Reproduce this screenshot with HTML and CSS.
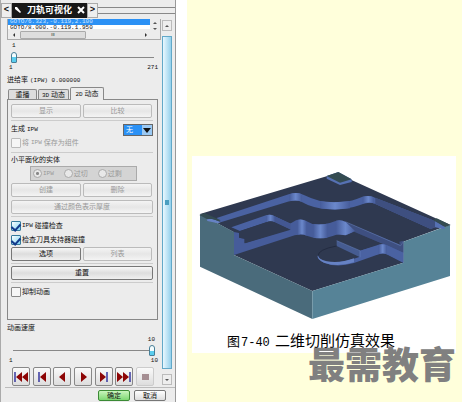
FILE: index.html
```html
<!DOCTYPE html>
<html lang="zh-CN">
<head>
<meta charset="utf-8">
<title>刀轨可视化</title>
<link rel="stylesheet" href="styles.css">
</head>
<body>
<main class="page">
  <section class="dialog">
    <header class="titlebar">
      <button class="nav" aria-label="上一个">&lt;</button>
      <div class="title">
        <svg class="pin" viewBox="0 0 8 8"><path d="M1 1l2 0 4 5-1 1-5-4z" fill="#fff"/></svg>
        <h1>刀轨可视化</h1>
        <button class="close" aria-label="关闭"><svg viewBox="0 0 8 8"><path d="M1 1l6 6M7 1l-6 6" stroke="#fff" stroke-width="2"/></svg></button>
      </div>
      <button class="nav" aria-label="下一个">&gt;</button>
      <span class="grip"></span>
    </header>
    <div class="body">
      <div class="content">
        <div class="list">
          <div class="rows">
            <div class="row selected">GOTO/6.323,-0.119,2.100</div>
            <div class="row">GOTO/8.000,-0.119,1.950</div>
          </div>
          <div class="spin"><i class="up"></i><i class="down"></i></div>
          <div class="hscroll"><i class="left"></i><span class="hthumb">III</span><i class="right"></i></div>
        </div>
        <div class="value"><span class="n">1</span></div>
        <input class="slider" type="range" min="1" max="271" value="1" aria-label="刀轨位置">
        <div class="limits"><span>1</span><span>271</span></div>
        <p class="feed">进给率 <span class="n">(IPW) 0.000000</span></p>
        <div class="tabs">
          <button class="tab">重播</button>
          <button class="tab"><span class="n">3D</span> 动态</button>
          <button class="tab active"><span class="n">2D</span> 动态</button>
        </div>
        <div class="panel">
          <div class="pair"><button class="btn" disabled>显示</button><button class="btn" disabled>比较</button></div>
          <hr>
          <div class="field">
            <label for="ipw">生成 <span class="n">IPW</span></label>
            <span class="combo"><select id="ipw"><option>无</option></select><svg viewBox="0 0 10 10"><path d="M1 3h8l-4 5z" fill="#111"/></svg></span>
          </div>
          <label class="check off"><input type="checkbox" disabled>将 <span class="n">IPW</span> 保存为组件</label>
          <hr>
          <p class="group">小平面化的实体</p>
          <div class="radios">
            <label><input type="radio" name="solid" checked disabled><span class="n">IPW</span></label>
            <label><input type="radio" name="solid" disabled>过切</label>
            <label><input type="radio" name="solid" disabled>过剩</label>
          </div>
          <div class="pair"><button class="btn" disabled>创建</button><button class="btn" disabled>删除</button></div>
          <button class="btn wide" disabled>通过颜色表示厚度</button>
          <hr>
          <label class="check"><input type="checkbox" checked><span class="n">IPW</span> 碰撞检查</label>
          <label class="check"><input type="checkbox" checked>检查刀具夹持器碰撞</label>
          <div class="pair"><button class="btn">选项</button><button class="btn" disabled>列表</button></div>
          <hr>
          <button class="btn wide">重置</button>
          <hr>
          <label class="check"><input type="checkbox">抑制动画</label>
        </div>
        <p class="speed">动画速度</p>
        <div class="value end"><span class="n">10</span></div>
        <input class="slider" type="range" min="1" max="10" value="10" aria-label="动画速度">
        <div class="limits"><span>1</span><span>10</span></div>
        <div class="player">
          <button aria-label="到开头"><svg viewBox="0 0 16 16"><path d="M2 3v10" stroke="#2a2a9a" stroke-width="1.4"/><path d="M9 3v10L3 8zM15 3v10L9 8z" fill="#8d0505"/></svg></button>
          <button aria-label="上一步"><svg viewBox="0 0 16 16"><path d="M5 3v10" stroke="#2a2a9a" stroke-width="1.4"/><path d="M12 3v10L6 8z" fill="#8d0505"/></svg></button>
          <button aria-label="倒放"><svg viewBox="0 0 16 16"><path d="M11 3v10L5 8z" fill="#8d0505"/></svg></button>
          <button aria-label="播放"><svg viewBox="0 0 16 16"><path d="M6 3v10l6-5z" fill="#8d0505"/></svg></button>
          <button aria-label="下一步"><svg viewBox="0 0 16 16"><path d="M4 3v10l6-5z" fill="#8d0505"/><path d="M11 3v10" stroke="#2a2a9a" stroke-width="1.4"/></svg></button>
          <button aria-label="到结尾"><svg viewBox="0 0 16 16"><path d="M1 3v10l6-5zM7 3v10l6-5z" fill="#8d0505"/><path d="M14 3v10" stroke="#2a2a9a" stroke-width="1.4"/></svg></button>
          <button aria-label="停止" disabled><svg viewBox="0 0 16 16"><path d="M5 5h7v6H5z" fill="#a58e92"/></svg></button>
        </div>
      </div>
      <div class="vscroll">
        <i class="cap"><b class="up"></b></i>
        <span class="vthumb"></span>
        <i class="cap"><b class="down"></b></i>
      </div>
    </div>
    <footer class="actions"><button class="ok">确定</button><button>取消</button></footer>
  </section>

  <section class="sheet">
    <figure class="figure">
      <svg class="part" viewBox="6 18 792 516" role="img" aria-label="二维切削仿真效果">
        <defs>
          <linearGradient id="w" x1="0" x2="1"><stop offset="0" stop-color="#465c9a"/><stop offset=".5" stop-color="#6b88cb"/><stop offset="1" stop-color="#465c9a"/></linearGradient>
        </defs>
        <path d="M30 192L440 70 780 224 640 275V338L367 423 132 315V247Z" fill="#2f3950"/>
        <path d="M30 192L132 246V315L367 423V507L30 350Z" fill="#4a6b7b"/>
        <path d="M367 423L640 338V275L780 225V378L367 507Z" fill="#568397"/>
        <!-- outer ledge -->
        <path d="M80 204L296 133Q320 125 340 134Q390 158 430 157Q475 157 500 147Q532 132 555 143L735 213V232L722 237 556 162Q535 153 508 166Q470 180 420 178Q370 176 334 155Q318 148 298 154L92 217Z" fill="#4a62a2"/>
        <path d="M556 143L735 213V232L722 237 556 162Z" fill="#3e4f80"/>
        <path d="M298 133Q320 125 336 133V155Q318 148 298 154Z" fill="url(#w)"/>
        <path d="M390 153Q430 160 480 153V175Q430 182 390 174Z" fill="url(#w)"/>
        <path d="M518 140Q536 135 552 142V160Q536 154 518 161Z" fill="url(#w)"/>
        <!-- stepped wall -->
        <path d="M132 246L147 249V263L163 266V280L300 237V221L318 211Q335 205 350 214Q368 226 390 223Q415 222 430 215Q450 206 466 215L630 284 640 275V338L594 315Q580 307 568 312L510 322V300L572 283 492 246 468 256Q448 248 428 258Q390 272 350 257Q336 250 314 256L132 315Z" fill="#465c9a"/>
        <path d="M466 215L630 287 628 275 640 272V308L592 286 492 246 466 236Z" fill="#3e4f80"/>
        <path d="M466 215L632 287 640 275" fill="none" stroke="#657cae" stroke-width="1.5"/>
        <path d="M322 210Q336 206 350 214V257Q336 250 322 254Z" fill="url(#w)"/>
        <path d="M370 222Q390 225 412 221V263Q390 267 370 263Z" fill="url(#w)"/>
        <path d="M438 212Q453 208 468 217L495 243 466 256 438 253Z" fill="url(#w)"/>
        <!-- left pocket -->
        <path d="M124 232L228 196Q242 192 254 199L302 221V239L254 217Q242 211 228 217L150 243Z" fill="#4a62a2"/>
        <path d="M228 196Q242 192 254 199V217Q242 211 228 217Z" fill="url(#w)"/>
        <path d="M254 199L302 221V239L254 217Z" fill="#435792"/>
        <path d="M150 243L230 217Q242 211 254 217L302 239 165 280V266L148 263V243Z" fill="#2f3950"/>
        <!-- raised step and round pocket -->
        <path d="M440 272L492 245 580 282 510 302Z" fill="#2f3950"/>
        <path d="M440 272L510 302V322L440 288Z" fill="#465c91"/>
        <path d="M510 302L566 284Q578 281 590 286L640 308V338L594 314Q580 308 566 313L492 339Q440 354 402 338Q380 325 384 314Q384 330 412 335Q450 342 510 320Z" fill="#4a62a2"/>
        <path d="M384 314Q382 326 410 334Q450 341 492 325V337Q440 353 402 338Q378 326 384 314Z" fill="#6682c4"/>
        <path d="M566 284Q578 281 590 286V312Q578 307 566 313Z" fill="url(#w)"/>
        <path d="M440 288Q384 298 384 318" fill="none" stroke="#1c2438" stroke-width="2"/>
        <path d="M440 272L510 302V322" fill="none" stroke="#6c88c4" stroke-width="1.5"/>
        <!-- corner pads -->
        <path d="M410 78L445 66 485 88V96L450 105 410 86Z" fill="#5671b3"/>
        <path d="M410 78L445 66 485 88 450 98Z" fill="#344b51"/>
        <path d="M50 207Q70 203 92 217L84 220 52 213Z" fill="#6682c4"/>
        <path d="M28 195L44 189 92 211 86 214Q65 202 52 208Z" fill="#344b51"/>
        <path d="M735 212L764 230V238L735 232Z" fill="#5671b3"/>
        <path d="M730 211L740 205 782 225 766 231Z" fill="#344b51"/>
      </svg>
      <figcaption><small>图<span class="code">7-40</span></small> 二维切削仿真效果</figcaption>
      <div class="watermark">最需教育</div>
    </figure>
  </section>
</main>
</body>
</html>
```
FILE: styles.css
```css
* { box-sizing: border-box; }
body {
  margin: 0;
  background: #fff;
  color: #111;
  font: 7px/10px "Liberation Sans", "Noto Sans CJK SC", sans-serif;
}
h1, p, figure { margin: 0; }
button { font: inherit; color: inherit; padding: 0; }
.n, .limits { font-family: "Liberation Mono", monospace; font-size: 6px; }
.page {
  display: grid;
  grid-template-columns: 176px minmax(0, 1fr);
  gap: 11px;
  min-height: 100vh;
}

/* dialog frame */
.dialog {
  display: flex;
  flex-direction: column;
  background: #ececec;
  border-left: 1px solid #aaa;
  border-right: 1px solid #999;
}
.titlebar { display: flex; align-items: center; height: 19px; padding-top: 1px; }
.nav {
  width: 11px;
  height: 15px;
  border: 1px solid #aaa;
  background: #eee;
  font: bold 9px/12px "Liberation Mono", monospace;
}
.title {
  display: flex;
  align-items: center;
  gap: 5px;
  height: 15px;
  padding: 0 2px;
  background: #181818;
  color: #fff;
}
.title svg { display: block; width: 8px; height: 8px; }
.title h1 { font-size: 9px; line-height: 14px; }
.close { border: 0; background: none; }
.grip {
  flex: 1;
  height: 7px;
  border-top: 1px solid #888;
  border-bottom: 1px solid #888;
}
.body { display: flex; flex: 1; gap: 1px; padding-right: 3px; }
.content { flex: 1; min-width: 0; padding-left: 6px; }

/* tool path list */
.list {
  display: grid;
  grid-template-columns: 1fr 10px;
  border: 1px solid #aaa;
  border-top: 0;
  width: 154px;
  height: 21px;
}
.rows { height: 10px; overflow: hidden; background: #fff; padding-left: 2px; }
.row {
  height: 6px;
  font: 6px/6px "Liberation Mono", monospace;
  white-space: nowrap;
}
.selected { background: #2b91f5; color: #cfe6ff; margin-left: -2px; padding-left: 2px; }
.spin { display: flex; flex-direction: column; align-items: center; justify-content: space-between; padding: 3px 0 0; }
.up, .down, .left, .right { border: 2px solid transparent; }
.up { border-bottom-color: #555; border-top: 0; }
.down { border-top-color: #555; border-bottom: 0; }
.left { border-right-color: #333; border-left: 0; }
.right { border-left-color: #333; border-right: 0; }
.hscroll { display: flex; align-items: center; padding: 1px 3px 0 5px; gap: 5px; }
.hthumb {
  width: 66px;
  height: 8px;
  border: 1px solid #aaa;
  border-radius: 1px;
  background: #ddd;
  font: 4px/6px "Liberation Sans", sans-serif;
  text-align: center;
}
.hscroll .right { margin-left: auto; }

/* sliders */
.value { height: 11px; padding: 0 6px 0 5px; }
.end { text-align: right; height: 10px; }
.slider {
  display: block;
  appearance: none;
  width: 144px;
  height: 12px;
  margin: 0 0 0 4px;
  background: linear-gradient(#888, #888) center / 141px 1px no-repeat;
}
.slider::-webkit-slider-thumb {
  appearance: none;
  width: 6px;
  height: 11px;
  border: 1px solid #477f98;
  border-radius: 3px 3px 1px 1px;
  background: linear-gradient(#f5fdff 50%, #5bcdee 50%);
}
.limits { display: flex; justify-content: space-between; width: 151px; padding-left: 2px; }
.feed { height: 14px; padding-top: 2px; }

/* tabs */
.tabs { display: flex; gap: 1px; align-items: flex-end; height: 12px; padding-left: 1px; }
.tab {
  width: 29px;
  height: 10px;
  border: 1px solid #888;
  border-bottom: 0;
  border-radius: 2px 2px 0 0;
  background: #ddd;
  line-height: 9px;
  white-space: nowrap;
}
.tab + .tab { width: 31px; }
.tab.active { position: relative; width: 34px; height: 13px; margin-bottom: -1px; background: #ececec; }
.panel {
  display: flex;
  flex-direction: column;
  width: 151px;
  min-height: 221px;
  padding: 4px 4px 4px 3px;
  border: 1px solid #888;
}
.pair { display: grid; grid-template-columns: 70px 69px; gap: 2px; }
.btn {
  height: 14px;
  border: 1px solid #777;
  border-radius: 2px;
  background: linear-gradient(#f8f8f8, #ddd 50%, #f0f0f0);
  line-height: 12px;
}
.btn:disabled { border-color: #bbb; color: #999; background: linear-gradient(#f4f4f4, #e6e6e6 50%, #f4f4f4); }
hr { width: 100%; margin: 2px 0; border: 0; border-top: 1px solid #ccc; }
.field { display: flex; justify-content: space-between; align-items: center; height: 13px; }
.combo {
  display: flex;
  width: 30px;
  height: 12px;
  border: 1px solid #666;
}
.combo select {
  appearance: none;
  width: 18px;
  padding: 0 2px;
  border: 0;
  border-radius: 0;
  background: #2b91f5;
  color: #fff;
  font: inherit;
}
.combo svg { width: 10px; height: 10px; background: #9bc9f3; }
.check { display: flex; align-items: center; height: 14px; white-space: pre; }
.check input, .radios input { appearance: none; flex: none; margin: 0; border: 1px solid #888; }
.check input {
  display: grid;
  place-items: center;
  width: 10px;
  height: 10px;
  margin-right: 1px;
  background: #f6f6f6;
  border-radius: 1px;
}
.check input:checked { border-color: #357a9b; background: linear-gradient(135deg, #fff, #7cd6f5); }
.check input:checked::after {
  content: "";
  width: 4px;
  height: 7px;
  border: solid #123a8c;
  border-width: 0 2px 2px 0;
  transform: rotate(42deg);
}
.off { color: #999; }
.off input { border-color: #bbb; }
.group { height: 11px; }
.radios {
  display: flex;
  align-items: center;
  gap: 10px;
  width: 107px;
  height: 15px;
  margin: 0 0 2px 19px;
  padding-left: 2px;
  border: 1px solid #aaa;
  background: #d4d4d4;
  color: #999;
}
.radios label { display: flex; align-items: center; gap: 1px; }
.radios input { width: 9px; height: 9px; border-radius: 50%; background: #e8e8e8; border-color: #aaa; }
.radios input:checked { background: radial-gradient(#888 25%, #e8e8e8 35%); }
.wide { width: 100%; }
.pair + .wide { margin-top: 3px; }
.speed { height: 14px; padding-top: 3px; }

/* playback */
.player { display: flex; justify-content: space-between; width: 142px; margin-left: 5px; padding-top: 1px; }
.player button {
  width: 18px;
  height: 19px;
  border: 1px solid #888;
  border-radius: 2px;
  background: linear-gradient(#fafafa, #ddd);
}
.player button:disabled { border-color: #ccc; }
.player svg { display: block; width: 16px; height: 16px; }

/* vertical scroll bar */
.vscroll { display: flex; flex-direction: column; align-items: center; gap: 5px; width: 10px; padding: 1px 0 2px; }
.cap {
  display: grid;
  place-items: center;
  width: 10px;
  height: 11px;
  border: 1px solid #bbb;
  background: #eee;
}
.vthumb {
  flex: 1;
  width: 10px;
  border: 1px solid #62a8c8;
  background: linear-gradient(#4a9ec0, #4a9ec0) 50% 38% / 4px 5px no-repeat, linear-gradient(90deg, #e9f8ff, #94d0ec);
  background-position: center;
}
.actions {
  display: flex;
  justify-content: flex-end;
  gap: 4px;
  margin-left: 4px;
  padding: 2px 9px 1px 0;
  border-top: 1px solid #bbb;
}
.actions button {
  width: 32px;
  height: 11px;
  border: 1px solid #777;
  border-radius: 2px;
  background: linear-gradient(#fff, #ddd);
  line-height: 8px;
}
.actions .ok { border-color: #3b8a35; background: linear-gradient(#c9f5bd, #7ed873); }

/* illustration */
.sheet { padding: 156px 6px 0 5px; background: #ffffdb; }
.figure { position: relative; background: #fff; }
.part { display: block; width: 100%; }
figcaption {
  height: 25px;
  padding-left: 35px;
  font: 15px/25px "Liberation Sans", "Noto Sans CJK SC", sans-serif;
  color: #000;
}
figcaption small { font-size: 13px; }
.code { margin: 0 1px; font: 12px "Liberation Mono", monospace; }
.watermark {
  position: absolute;
  right: 0;
  bottom: -30px;
  color: #808080;
  font: 900 37px/40px "Noto Sans CJK SC", sans-serif;
}
```
